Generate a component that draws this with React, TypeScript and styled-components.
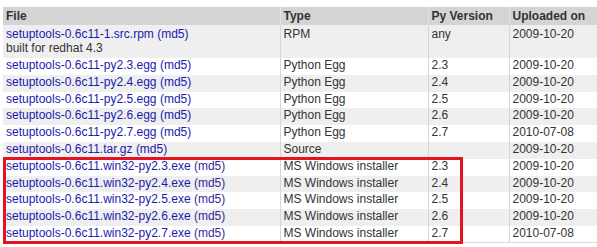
import styled, { createGlobalStyle } from "styled-components";

const GlobalStyle = createGlobalStyle`
  html, body {
    margin: 0;
    padding: 0;
    background: #ffffff;
  }
  body {
    font-family: "Liberation Sans", Arial, sans-serif;
    font-size: 12px;
    color: #333333;
  }
`;

interface FileRow {
  name: string;
  note?: string;
  type: string;
  py: string;
  uploaded: string;
  visited?: boolean;
}

const rows: FileRow[] = [
  {
    name: "setuptools-0.6c11-1.src.rpm",
    note: "built for redhat 4.3",
    type: "RPM",
    py: "any",
    uploaded: "2009-10-20",
  },
  { name: "setuptools-0.6c11-py2.3.egg", type: "Python Egg", py: "2.3", uploaded: "2009-10-20" },
  { name: "setuptools-0.6c11-py2.4.egg", type: "Python Egg", py: "2.4", uploaded: "2009-10-20" },
  { name: "setuptools-0.6c11-py2.5.egg", type: "Python Egg", py: "2.5", uploaded: "2009-10-20" },
  { name: "setuptools-0.6c11-py2.6.egg", type: "Python Egg", py: "2.6", uploaded: "2009-10-20" },
  { name: "setuptools-0.6c11-py2.7.egg", type: "Python Egg", py: "2.7", uploaded: "2010-07-08" },
  { name: "setuptools-0.6c11.tar.gz", type: "Source", py: "", uploaded: "2009-10-20" },
  { name: "setuptools-0.6c11.win32-py2.3.exe", type: "MS Windows installer", py: "2.3", uploaded: "2009-10-20", visited: true },
  { name: "setuptools-0.6c11.win32-py2.4.exe", type: "MS Windows installer", py: "2.4", uploaded: "2009-10-20", visited: true },
  { name: "setuptools-0.6c11.win32-py2.5.exe", type: "MS Windows installer", py: "2.5", uploaded: "2009-10-20", visited: true },
  { name: "setuptools-0.6c11.win32-py2.6.exe", type: "MS Windows installer", py: "2.6", uploaded: "2009-10-20", visited: true },
  { name: "setuptools-0.6c11.win32-py2.7.exe", type: "MS Windows installer", py: "2.7", uploaded: "2010-07-08", visited: true },
];

const Page = styled.div`
  position: relative;
  padding: 7px 0 0 3px;
  width: 597px;
  height: 247px;
  box-sizing: border-box;
  overflow: hidden;
`;

const Table = styled.table`
  border-collapse: collapse;
  table-layout: fixed;
  width: 600px;
  border-bottom: 1px solid #dcdcdc;
`;

const HeadCell = styled.th<{ $width: number }>`
  width: ${(p) => p.$width}px;
  height: 18px;
  padding: 0 3px;
  box-sizing: border-box;
  background: #d4d4d4;
  border-left: 1px solid #e4e4e4;
  text-align: left;
  font-weight: bold;
  font-size: 12px;
  color: #333333;
  &:first-child {
    border-left: none;
  }
`;

const Row = styled.tr<{ $shaded: boolean }>`
  background: ${(p) => (p.$shaded ? "#efefef" : "#ffffff")};
`;

const Cell = styled.td<{ $tall?: boolean }>`
  height: ${(p) => (p.$tall ? "33px" : "16.8px")};
  padding: ${(p) => (p.$tall ? "2px 3px 0" : "0 3px")};
  box-sizing: border-box;
  vertical-align: top;
  line-height: 15px;
  border-left: 1px solid #d6d6d6;
  color: #333333;
  white-space: nowrap;
  &:first-child {
    border-left: none;
  }
`;

const FileLink = styled.a`
  color: #1a1aae;
  text-decoration: none;
`;

const Md5 = styled.a<{ $visited?: boolean }>`
  color: ${(p) => (p.$visited ? "#35289a" : "#1a1aae")};
  text-decoration: none;
`;

const Note = styled.div`
  color: #333333;
  line-height: 13px;
`;

const Highlight = styled.div`
  position: absolute;
  left: 3px;
  top: 157px;
  width: 460px;
  height: 87px;
  box-sizing: border-box;
  border: 3px solid #e3141e;
  pointer-events: none;
`;

export default function App() {
  return (
    <>
      <GlobalStyle />
      <Page>
        <Table>
          <thead>
            <tr>
              <HeadCell $width={277}>File</HeadCell>
              <HeadCell $width={148}>Type</HeadCell>
              <HeadCell $width={81}>Py Version</HeadCell>
              <HeadCell $width={94}>Uploaded on</HeadCell>
            </tr>
          </thead>
          <tbody>
            {rows.map((row, idx) => (
              <Row key={row.name} $shaded={idx % 2 === 0}>
                <Cell $tall={!!row.note}>
                  <FileLink href="#">{row.name}</FileLink>{" "}
                  <Md5 href="#" $visited={row.visited}>
                    (md5)
                  </Md5>
                  {row.note && <Note>{row.note}</Note>}
                </Cell>
                <Cell $tall={!!row.note}>{row.type}</Cell>
                <Cell $tall={!!row.note}>{row.py}</Cell>
                <Cell $tall={!!row.note}>{row.uploaded}</Cell>
              </Row>
            ))}
          </tbody>
        </Table>
        <Highlight />
      </Page>
    </>
  );
}
